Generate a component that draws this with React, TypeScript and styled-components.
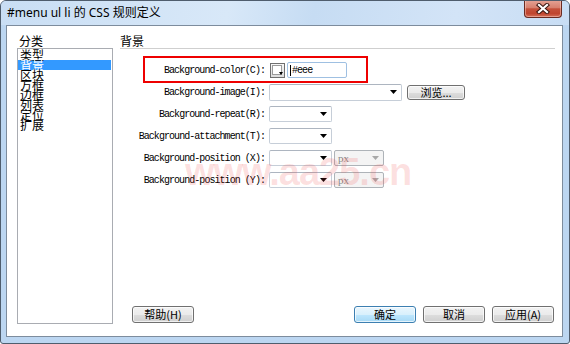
import React from "react";
import styled, { createGlobalStyle } from "styled-components";

const GlobalStyle = createGlobalStyle`
	html, body {
		margin: 0;
		padding: 0;
		background: #fff;
	}
	body {
		width: 570px;
		height: 344px;
		overflow: hidden;
		font-family: "Noto Sans", "Noto Sans CJK SC", sans-serif;
	}
`;

const cjk = `"Noto Sans CJK SC", "Noto Sans", sans-serif`;
const mono = `"Liberation Mono", "DejaVu Sans Mono", monospace`;

const Window = styled.div`
	position: relative;
	box-sizing: border-box;
	width: 570px;
	height: 344px;
	display: flex;
	flex-direction: column;
	border: 1px solid #4f5d6d;
	border-radius: 6px 6px 3px 3px;
	background: #bcd6f1;
	overflow: hidden;
`;

const TitleBar = styled.div`
	height: 24px;
	flex: none;
	display: flex;
	align-items: flex-start;
	padding: 0 7px 0 6px;
	background: linear-gradient(100deg, #c9def4 0%, #d8e8f8 40%, #c6dcf3 55%, #d3e4f7 80%, #c8ddf4 100%);
`;

const Title = styled.div`
	flex: 1;
	line-height: 24px;
	font-size: 12px;
	color: #000;
	font-family: "Noto Sans", "Noto Sans CJK SC", sans-serif;
	white-space: nowrap;
`;

const CloseButton = styled.div`
	box-sizing: border-box;
	width: 38px;
	height: 18px;
	margin-top: -1px;
	display: flex;
	align-items: center;
	justify-content: center;
	border: 1px solid #6a2a21;
	border-top: none;
	border-radius: 0 0 4px 4px;
	background: linear-gradient(#e5a497 0%, #d7806e 45%, #c4503a 52%, #c0452f 80%, #d4705a 100%);
	box-shadow: inset 0 0 0 1px rgba(255, 220, 210, 0.45);
`;

const Frame = styled.div`
	flex: 1;
	display: flex;
	padding: 0 6px 6px 5px;
	min-height: 0;
`;

const Client = styled.div`
	flex: 1;
	display: grid;
	grid-template-columns: 96px 1fr;
	column-gap: 7px;
	padding: 8px 7px 12px 10px;
	background: #fff;
	border: 1px solid #7d8c9d;
	min-height: 0;
`;

const Column = styled.div`
	display: flex;
	flex-direction: column;
	min-height: 0;
`;

const PaneLabel = styled.div<{ $rule?: boolean }>`
	height: 14px;
	line-height: 14px;
	font-size: 12px;
	font-family: ${cjk};
	color: #000;
	padding-left: ${(p) => (p.$rule ? "0" : "2px")};
	border-bottom: ${(p) => (p.$rule ? "1px solid #cfcfcf" : "none")};
`;

const ListBox = styled.div`
	flex: 1;
	box-sizing: border-box;
	border: 1px solid #a9acb2;
	padding-top: 1px;
	background: #fff;
`;

const ListItem = styled.div<{ $selected?: boolean }>`
	height: 10px;
	line-height: 10px;
	font-size: 12px;
	font-family: ${cjk};
	padding-left: 2px;
	margin-right: 1px;
	color: ${(p) => (p.$selected ? "#fff" : "#000")};
	background: ${(p) => (p.$selected ? "#3399ff" : "transparent")};
	white-space: nowrap;
`;

const Form = styled.div`
	position: relative;
	margin-top: 10px;
	display: grid;
	grid-template-columns: 146px 1fr;
	grid-auto-rows: 22px;
	column-gap: 3px;
	align-items: center;
`;

const Highlight = styled.div`
	position: absolute;
	left: 23px;
	top: -3px;
	width: 225px;
	height: 27px;
	box-sizing: border-box;
	border: 2px solid #ee0000;
	pointer-events: none;
`;

const FieldLabel = styled.div`
	text-align: right;
	font-family: ${mono};
	font-size: 10px;
	letter-spacing: -0.95px;
	color: #000;
	white-space: pre;
	padding-right: 1px;
`;

const Controls = styled.div`
	display: flex;
	align-items: center;
	gap: 2px;
`;

const Swatch = styled.div`
	position: relative;
	box-sizing: border-box;
	width: 15px;
	height: 15px;
	margin-left: 1px;
	border: 1px solid #6f6f6f;
	background: linear-gradient(#f7f7f7, #dcdcdc);
	&::before {
		content: "";
		position: absolute;
		left: 1px;
		top: 1px;
		width: 8px;
		height: 8px;
		border: 1px solid #9a9a9a;
		background: #fff;
	}
	&::after {
		content: "";
		position: absolute;
		right: 1px;
		bottom: 2px;
		border-left: 2.5px solid transparent;
		border-right: 2.5px solid transparent;
		border-top: 3px solid #000;
	}
`;

const TextBox = styled.div`
	box-sizing: border-box;
	width: 60px;
	height: 16px;
	display: flex;
	align-items: center;
	padding-left: 2px;
	border: 1px solid #9fc0e2;
	border-radius: 2px;
	font-family: ${mono};
	font-size: 10px;
	letter-spacing: -0.95px;
	color: #000;
`;

const Caret = styled.span`
	display: inline-block;
	width: 1px;
	height: 11px;
	background: #000;
	margin-right: 1px;
`;

const Select = styled.div<{ $width: number; $disabled?: boolean; $tall?: boolean }>`
	box-sizing: border-box;
	width: ${(p) => p.$width}px;
	height: ${(p) => (p.$tall ? 17 : 16)}px;
	display: flex;
	align-items: center;
	justify-content: space-between;
	padding: 0 4px 0 3px;
	border: 1px solid ${(p) => (p.$disabled ? "#aeb3b8" : "#c6ced8")};
	border-top-color: ${(p) => (p.$disabled ? "#aeb3b8" : "#adb5c0")};
	border-radius: 2px;
	background: ${(p) => (p.$disabled ? "#f4f4f4" : "#fff")};
	font-family: "Liberation Serif", serif;
	font-size: 11px;
	color: #8a8a8a;
`;

const WinButton = styled.div<{ $width: number; $focused?: boolean; $small?: boolean }>`
	box-sizing: border-box;
	width: ${(p) => p.$width}px;
	height: ${(p) => (p.$small ? 15 : 17)}px;
	margin-left: ${(p) => (p.$small ? 3 : 0)}px;
	display: flex;
	align-items: center;
	justify-content: center;
	border: 1px solid ${(p) => (p.$focused ? "#3c7fb1" : "#707070")};
	border-radius: 3px;
	background: ${(p) =>
		p.$focused
			? "linear-gradient(#eaf6fd 0%, #d9f0fc 50%, #bee6fd 52%, #a7d9f5 100%)"
			: "linear-gradient(#f2f2f2 0%, #ebebeb 50%, #dddddd 52%, #cfcfcf 100%)"};
	box-shadow: inset 0 0 0 1px rgba(255, 255, 255, 0.7);
	font-family: ${cjk};
	font-size: 11px;
	line-height: 1;
	color: #000;
	white-space: nowrap;
`;

const Spacer = styled.div`
	flex: 1;
`;

const ButtonRow = styled.div`
	display: flex;
	align-items: center;
	gap: 7px;
	margin: 0 1px 1px 12px;
`;

const Watermark = styled.div`
	position: absolute;
	left: 184px;
	top: 152px;
	line-height: 38px;
	font-family: "Liberation Sans", Arial, sans-serif;
	font-weight: bold;
	font-size: 38px;
	letter-spacing: -1px;
	color: rgba(240, 60, 60, 0.16);
	pointer-events: none;
	white-space: nowrap;
`;

const Arrow = ({ color = "#000" }: { color?: string }) => (
	<svg width="7" height="4" viewBox="0 0 7 4">
		<polygon points="0,0 7,0 3.5,4" fill={color} />
	</svg>
);

const CloseGlyph = () => (
	<svg width="14" height="11" viewBox="0 0 14 11">
		<path d="M3 2 L11 9 M11 2 L3 9" stroke="#3b1712" strokeWidth="4.2" strokeLinecap="square" />
		<path d="M3 2 L11 9 M11 2 L3 9" stroke="#fff" strokeWidth="2.2" strokeLinecap="square" />
	</svg>
);

const categories = ["类型", "背景", "区块", "方框", "边框", "列表", "定位", "扩展"];

const fields: { label: string; wide?: boolean; browse?: boolean; unit?: boolean; color?: boolean }[] = [
	{ label: "Background-color(C):", color: true },
	{ label: "Background-image(I):", wide: true, browse: true },
	{ label: "Background-repeat(R):" },
	{ label: "Background-attachment(T):" },
	{ label: "Background-position (X):", unit: true },
	{ label: "Background-position (Y):", unit: true },
];

export default function App() {
	return (
		<>
			<GlobalStyle />
			<Window>
				<TitleBar>
					<Title>#menu ul li 的 CSS 规则定义</Title>
					<CloseButton>
						<CloseGlyph />
					</CloseButton>
				</TitleBar>
				<Frame>
					<Client>
						<Column>
							<PaneLabel>分类</PaneLabel>
							<ListBox>
								{categories.map((c) => (
									<ListItem key={c} $selected={c === "背景"}>
										{c}
									</ListItem>
								))}
							</ListBox>
						</Column>
						<Column>
							<PaneLabel $rule>背景</PaneLabel>
							<Form>
								<Highlight />
								{fields.map((f) => (
									<React.Fragment key={f.label}>
										<FieldLabel>{f.label}</FieldLabel>
										<Controls>
											{f.color ? (
												<>
													<Swatch />
													<TextBox>
														<Caret />
														#eee
													</TextBox>
												</>
											) : (
												<Select $width={f.wide ? 133 : 63} $tall={f.wide}>
													<span />
													<Arrow />
												</Select>
											)}
											{f.browse && (
												<WinButton $width={58} $small>
													浏览...
												</WinButton>
											)}
											{f.unit && (
												<Select $width={50} $disabled>
													<span>px</span>
													<Arrow color="#a8a8a8" />
												</Select>
											)}
										</Controls>
									</React.Fragment>
								))}
							</Form>
							<Spacer />
							<ButtonRow>
								<WinButton $width={62}>帮助(H)</WinButton>
								<Spacer />
								<WinButton $width={62} $focused>
									确定
								</WinButton>
								<WinButton $width={62}>取消</WinButton>
								<WinButton $width={62}>应用(A)</WinButton>
							</ButtonRow>
						</Column>
					</Client>
				</Frame>
				<Watermark>www.aa25.cn</Watermark>
			</Window>
		</>
	);
}
